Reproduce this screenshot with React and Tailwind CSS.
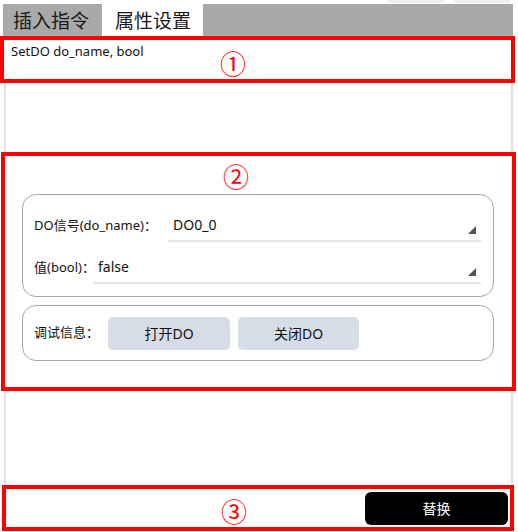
import React from "react";

const font = { fontFamily: '"Noto Sans", "Noto Sans CJK SC", sans-serif' };
const cjk = { fontFamily: '"Noto Sans CJK SC", sans-serif' };

function Corner() {
  return (
    <svg width="8" height="8" viewBox="0 0 8 8" className="block">
      <polygon points="8,0 8,8 0,8" fill="#555" />
    </svg>
  );
}

function SelectField({ value, className }) {
  return (
    <div className={`relative border-b-2 border-[#e6e6e6] ${className}`}>
      <span className="block pl-[5px] text-[14px] leading-[20px] text-[#111]">{value}</span>
      <span className="absolute right-[5px] bottom-[6px]"><Corner /></span>
    </div>
  );
}

export default function App() {
  return (
    <div className="w-[518px] h-[532px] bg-white flex flex-col overflow-hidden" style={font}>
      {/* faint strip above the tabs */}
      <div className="h-[4px] flex">
        <div className="ml-[388px] w-[56px] h-[3px] bg-[#eef1f4]" />
        <div className="ml-[9px] w-[57px] h-[3px] bg-[#eef1f4]" />
      </div>

      {/* tab bar */}
      <div className="ml-[3px] w-[510px] h-[32px] bg-[#a9a9a9] flex" style={cjk}>
        <div className="w-[99px] flex items-center pl-[10px] text-[19px] text-[#1a1a1a]">插入指令</div>
        <div className="w-[101px] bg-white flex items-center pl-[13px] text-[19px] text-[#1a1a1a]">属性设置</div>
      </div>

      {/* section 1: instruction signature */}
      <div className="relative w-[515px] h-[47px] border-4 border-[#ff0000] px-[7px] pt-[3px]">
        <div className="text-[13px] leading-[17px] text-[#111]">SetDO do_name, bool</div>
        <div className="absolute left-[216px] top-[8px] text-[26px] leading-[30px] text-[#ff0000]" style={cjk}>①</div>
      </div>

      <div className="ml-[4px] w-[509px] h-[69px] border-x-2 border-[#e0e0e0]" />

      {/* section 2: properties */}
      <div className="w-[515px] h-[239px] ml-[1px] border-4 border-[#ff0000] pl-[17px] pr-[16px]">
        <div className="h-[38px] flex justify-center pt-[5px] pr-[46px]">
          <span className="text-[26px] leading-[30px] text-[#ff0000]" style={cjk}>②</span>
        </div>
        <div className="w-[472px] h-[103px] rounded-[14px] border border-[#a8a8a8] pl-[11px] pr-[12px] pt-[20px]">
          <div className="flex items-start">
            <span className="w-[134px] shrink-0 whitespace-nowrap text-[13px] leading-[20px] text-[#111]">DO信号(do_name)：</span>
            <SelectField value="DO0_0" className="flex-1 h-[27px]" />
          </div>
          <div className="flex items-start mt-[15px]">
            <span className="w-[59px] shrink-0 whitespace-nowrap text-[13px] leading-[20px] text-[#111]">值(bool)：</span>
            <SelectField value="false" className="flex-1 h-[27px]" />
          </div>
        </div>
        <div className="mt-[8px] w-[472px] h-[56px] rounded-[14px] border border-[#a8a8a8] pl-[11px] flex items-center gap-[8px]">
          <span className="w-[66px] shrink-0 whitespace-nowrap text-[13px] text-[#111]">调试信息：</span>
          <button className="w-[122px] h-[33px] rounded-[5px] bg-[#d6dde7] text-[14px] text-[#111]">打开DO</button>
          <button className="w-[121px] h-[33px] rounded-[5px] bg-[#d6dde7] text-[14px] text-[#111]">关闭DO</button>
        </div>
      </div>

      <div className="ml-[4px] w-[509px] h-[94px] border-x-2 border-[#e0e0e0]" />

      {/* section 3: actions */}
      <div className="relative ml-[2px] w-[512px] h-[46px] border-4 border-[#ff0000] flex items-center justify-end pr-[2px]">
        <div className="absolute left-[215px] top-[7px] text-[26px] leading-[30px] text-[#ff0000]" style={cjk}>③</div>
        <button className="w-[143px] h-[33px] rounded-[6px] bg-black text-white text-[14px]">替换</button>
      </div>
    </div>
  );
}
